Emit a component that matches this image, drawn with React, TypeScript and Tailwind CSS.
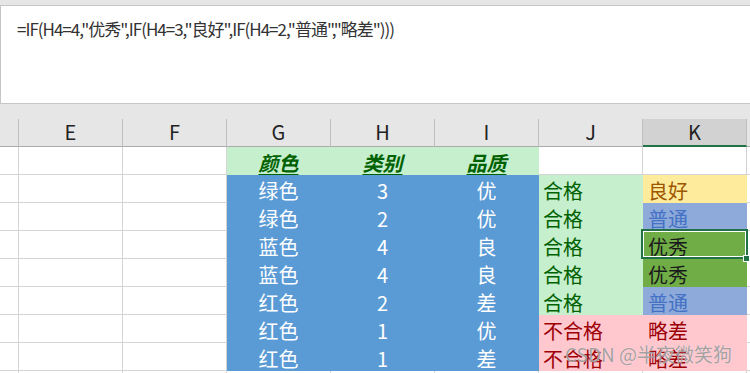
import React from "react";

type Cell = { text: string; cls: string; align: "center" | "left"; header?: boolean };

const BLUE = "bg-[#5b9bd5] border-[#5b9bd5] text-white";
const HGREEN = "bg-[#c6efce] border-[#c6efce] text-[#006100]";
const GREEN = "bg-[#c6efce] border-[#c6efce] text-[#006100]";
const RED = "bg-[#ffc7ce] border-[#ffc7ce] text-[#9c0006]";
const YELLOW = "bg-[#ffeb9c] border-[#ffeb9c] text-[#9c5700]";
const LBLUE = "bg-[#8eaadb] border-[#8eaadb] text-[#4472c4]";
const DGREEN = "bg-[#70ad47] border-[#70ad47] text-[#1a1a1a]";
const WHITE = "bg-white border-[#d4d4d4] text-black";

const data: [string, string, string, string, string, string, string][] = [
  ["绿色", "3", "优", "合格", GREEN, "良好", YELLOW],
  ["绿色", "2", "优", "合格", GREEN, "普通", LBLUE],
  ["蓝色", "4", "良", "合格", GREEN, "优秀", DGREEN],
  ["蓝色", "4", "良", "合格", GREEN, "优秀", DGREEN],
  ["红色", "2", "差", "合格", GREEN, "普通", LBLUE],
  ["红色", "1", "优", "不合格", RED, "略差", RED],
  ["红色", "1", "差", "不合格", RED, "略差", RED],
];

function Row({ cells }: { cells: Cell[] }) {
  return (
    <>
      <div className="h-[28px] border-r border-b border-[#d4d4d4] bg-white" />
      <div className="h-[28px] border-r border-b border-[#d4d4d4] bg-white" />
      <div className="h-[28px] border-r border-b border-[#d4d4d4] bg-white" />
      {cells.map((c, i) => (
        <div
          key={i}
          className={`h-[28px] border-r border-b ${c.cls} ${
            c.align === "center" ? "text-center" : "pl-[4px]"
          } pt-[6px] text-[20px] leading-[20px] whitespace-nowrap overflow-visible`}
        >
          {c.header ? (
            <span className="italic font-bold underline underline-offset-[3px] decoration-[1px]">
              {c.text}
            </span>
          ) : (
            c.text
          )}
        </div>
      ))}
      <div className="h-[28px] border-b border-[#d4d4d4] bg-white" />
    </>
  );
}

export default function App() {
  const cols = ["", "E", "F", "G", "H", "I", "J", "K"];
  return (
    <div
      className="relative w-[750px] h-[373px] overflow-hidden bg-white"
      style={{ fontFamily: '"Noto Sans CJK SC", "Noto Sans", sans-serif' }}
    >
      <div className="h-[5px] bg-[#e6e6e6]" />
      <div className="h-[99px] bg-white border border-r-0 border-[#c6c6c6] pl-[16px] pt-[13px] text-[17px] leading-[20px] tracking-[-1px] text-[#333] whitespace-nowrap">
        =IF(H4=4,"优秀",IF(H4=3,"良好",IF(H4=2,"普通","略差")))
      </div>
      <div className="h-[15px] bg-[#e6e6e6]" />
      <div className="grid grid-cols-[19px_repeat(7,104px)_1fr]">
        {cols.map((c, i) => (
          <div
            key={i}
            className={`h-[28px] border-r text-center text-[20px] leading-[26px] text-[#222] ${
              c === "K"
                ? "bg-[#d2d2d2] border-[#bfbfbf] border-b-2 border-b-[#217346] text-[#1e6b45]"
                : "bg-[#e6e6e6] border-[#bfbfbf] border-b border-b-[#ababab]"
            }`}
          >
            {c}
          </div>
        ))}
        <div className="h-[28px] bg-[#e6e6e6] border-b border-[#ababab]" />

        <Row
          cells={[
            { text: "颜色", cls: HGREEN, align: "center", header: true },
            { text: "类别", cls: HGREEN, align: "center", header: true },
            { text: "品质", cls: HGREEN, align: "center", header: true },
            { text: "", cls: WHITE, align: "left" },
            { text: "", cls: WHITE, align: "left" },
          ]}
        />
        {data.map((r, idx) => (
          <Row
            key={idx}
            cells={[
              { text: r[0], cls: BLUE, align: "center" },
              { text: r[1], cls: BLUE, align: "center" },
              { text: r[2], cls: BLUE, align: "center" },
              { text: r[3], cls: r[4], align: "left" },
              { text: r[5], cls: r[6] + " pl-[5px]", align: "left" },
            ]}
          />
        ))}
        <div className="h-[28px] border-r border-[#d4d4d4]" />
        <div className="h-[28px] border-r border-[#d4d4d4]" />
        <div className="h-[28px] border-r border-[#d4d4d4]" />
        <div className="h-[28px] border-r border-[#d4d4d4]" />
        <div className="h-[28px] border-r border-[#d4d4d4]" />
        <div className="h-[28px] border-r border-[#d4d4d4]" />
        <div className="h-[28px] border-r border-[#d4d4d4]" />
        <div className="h-[28px] border-r border-[#d4d4d4]" />
        <div className="h-[28px]" />
      </div>

      {/* selection */}
      <div className="absolute left-[641px] top-[229px] w-[107px] h-[30px] border-2 border-[#217346]">
        <div className="w-full h-full border border-white" />
      </div>
      <div className="absolute left-[743px] top-[255px] w-[7px] h-[7px] bg-[#217346] border border-white" />

      {/* watermark */}
      <div
        className="absolute left-[565px] top-[341px] text-[19px] leading-[26px] text-[#8c8c8c]/80 whitespace-nowrap"
        style={{ textShadow: "0 0 1px rgba(255,255,255,0.8)" }}
      >
        CSDN @半夜微笑狗
      </div>
    </div>
  );
}
